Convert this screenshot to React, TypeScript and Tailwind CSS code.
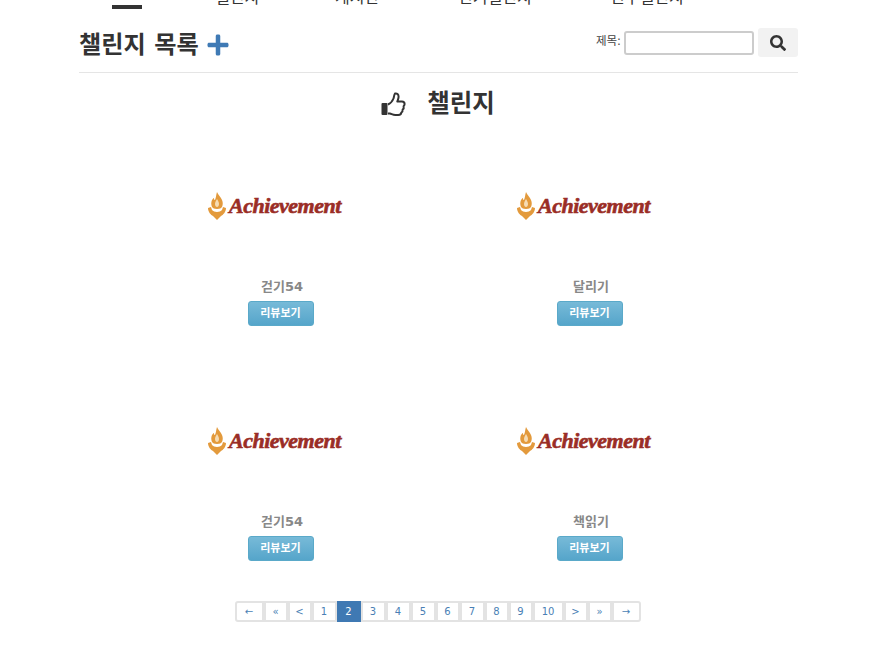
import React from "react";
import { FaSearch, FaPlus } from "react-icons/fa";

const font = { fontFamily: '"DejaVu Sans", "Noto Sans CJK KR", sans-serif' };

function Logo() {
  return (
    <div className="flex items-center gap-[3px] h-[30px] w-[134px]">
      <svg width="18" height="28" viewBox="0 0 18 28" className="shrink-0">
        <path d="M9 0c1 3 4 5 5 8 1 2 1 5 0 7-1 1-2 2-5 2s-4-1-5-2c-1-2-1-5 0-7 1-1 1-2 2-2 0 1 0 2 1 2 1-2 1-5 2-8z" fill="#e39a3c" />
        <path d="M9 7c1 2 2 3 2 5s-1 3-2 3-2-1-2-3 1-3 2-5z" fill="#f6dcb4" />
        <path d="M0 16l3-1 1 3c1 1 3 2 5 2s4-1 5-2l1-3 3 1c0 4-3 7-5 8l-4 4-4-4c-2-1-5-4-5-8z" fill="#e39a3c" />
      </svg>
      <span
        className="text-[22px] leading-none font-bold italic text-[#9a2d26] tracking-[-0.5px] whitespace-nowrap [-webkit-text-stroke:0.6px_#9a2d26]"
        style={{ fontFamily: '"Liberation Serif", serif' }}
      >
        Achievement
      </span>
    </div>
  );
}

function Card({ title }: { title: string }) {
  return (
    <div className="flex flex-col items-center h-[235px]">
      <div className="h-[142px] w-full flex items-center justify-center pr-[11px]">
        <Logo />
      </div>
      <div className="text-[13px] leading-[20px] font-bold text-[#888] h-[24px] pl-[3px]">{title}</div>
      <button className="h-[25px] w-[66px] pt-[2px] rounded-[3px] border border-[#5aa9c9] bg-gradient-to-b from-[#77bad8] to-[#55a5ca] text-white text-[11px] font-bold">
        리뷰보기
      </button>
    </div>
  );
}

const pages: [string, number, boolean?][] = [
  ["←", 29], ["«", 24], ["<", 24], ["1", 25], ["2", 24, true], ["3", 25], ["4", 25], ["5", 25], ["6", 24], ["7", 25], ["8", 24], ["9", 24], ["10", 31], [">", 24], ["»", 24], ["→", 29],
];

export default function App() {
  return (
    <div className="h-[651px] overflow-hidden bg-white text-[#333]" style={font}>
      <div className="ml-[79px] w-[719px]">
        <nav className="relative h-[9px] overflow-hidden">
          <div className="flex mt-[-12px] text-[16px] leading-[20px] text-[#333] h-[21px] whitespace-nowrap">
            <div className="w-[96px]" />
            <div className="w-[120px] pl-[40px]">챌린지</div>
            <div className="w-[123px] pl-[40px]">게시판</div>
            <div className="w-[152px] pl-[40px]">인기챌린지</div>
            <div className="pl-[40px]">친구챌린지</div>
          </div>
          <div className="absolute left-[33px] top-[5px] h-[4px] w-[30px] bg-[#333]" />
        </nav>
        <div className="flex items-start justify-between h-[64px] border-b border-[#e5e5e5]">
          <div className="flex items-center gap-[7px] mt-[20px]">
            <h1 className="text-[24.2px] leading-[32px] font-bold text-[#333]">챌린지 목록</h1>
            <FaPlus className="text-[#3f7ab5] w-[24px] h-[24px]" />
          </div>
          <div className="flex items-center mt-[19px]">
            <label className="text-[11.5px] text-[#444] mr-[3px] mt-[-1px]">제목:</label>
            <input className="w-[130px] h-[24px] rounded-[3px] border-2 border-[#ccc] bg-white" />
            <button className="ml-[4px] w-[40px] h-[29px] rounded-[3px] bg-[#f2f2f2] flex items-center justify-center">
              <FaSearch className="w-[16px] h-[16px] text-[#333]" />
            </button>
          </div>
        </div>
        <div className="flex items-center justify-center gap-[21px] h-[62px] pr-[1px]">
          <svg width="25" height="24" viewBox="0 0 25 24" className="shrink-0">
            <rect x="0.5" y="11" width="6" height="12" rx="1" fill="#333" />
            <path
              d="M7 12.500c2.500-1 4.500-3.500 5.500-6 .6-1.600.4-3.500 1.500-5 2-.5 3.600 1 3.600 3.300 0 1.700-.8 3.200-1.300 4.700h4.700c1.600 0 2.600 1.200 2.600 2.500 0 1-.5 1.700-1 2.200.4 1.500 0 2.700-1 3.400.2 1.400-.3 2.500-1.300 3 0 1.500-1 2.400-3 2.400h-3c-2.500 0-3.500-1-5.500-1.500H7"
              fill="none"
              stroke="#333"
              strokeWidth="2"
              strokeLinejoin="round"
            />
          </svg>
          <h2 className="text-[24.5px] leading-[32px] font-bold text-[#333]">챌린지</h2>
        </div>
      </div>
      <div className="ml-[126px] w-[618px] grid grid-cols-2">
        <Card title="걷기54" />
        <Card title="달리기" />
        <Card title="걷기54" />
        <Card title="책읽기" />
      </div>
      <div className="flex justify-center mt-[-4px] ml-[-15px]">
        {pages.map(([t, w, active], i) => (
          <span
            key={i}
            style={{ width: w }}
            className={
              "h-[21px] flex items-center justify-center text-[10px] border-2 first:rounded-l-[3px] last:rounded-r-[3px] " +
              (active ? "bg-[#3f79b3] border-[#3f79b3] text-white" : "bg-white border-[#e3e3e3] text-[#4a7fb5]")
            }
          >
            {t}
          </span>
        ))}
      </div>
    </div>
  );
}
